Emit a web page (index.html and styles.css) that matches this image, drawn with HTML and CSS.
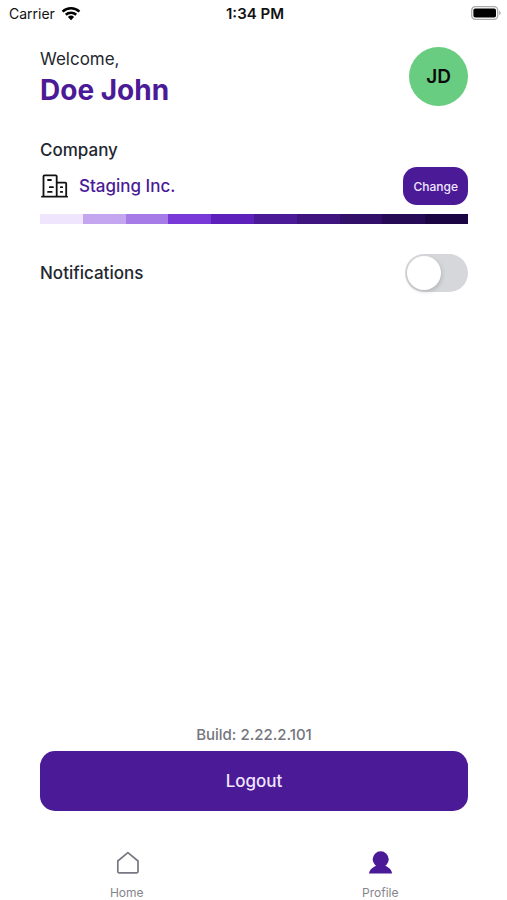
FILE: index.html
```html
<!DOCTYPE html>
<html lang="en">
<head>
  <meta charset="utf-8">
  <meta name="viewport" content="width=device-width, initial-scale=1">
  <title>Profile</title>
  <link rel="stylesheet" href="styles.css">
</head>
<body>
  <div class="status-bar">
    <div class="status-carrier">
      <span>Carrier</span>
      <svg class="wifi" viewBox="0 0 20 15" aria-hidden="true">
        <path d="M1.600 5.600a12.200 12.200 0 0 1 16.800 0M4.800 8.800a7.600 7.600 0 0 1 10.400 0" fill="none" stroke="#000" stroke-width="2.6"/>
        <path d="M6.900 10.900a4.500 4.500 0 0 1 6.200 0L10 14.200z" fill="#000"/>
      </svg>
    </div>
    <div class="status-time">1:34 PM</div>
    <div class="status-battery">
      <svg class="battery" viewBox="0 0 30 14" aria-hidden="true">
        <rect x=".7" y=".7" width="26" height="12.6" rx="3.6" fill="#fff" stroke="#aaa" stroke-width="1.3"/>
        <rect x="2.4" y="2.4" width="22.6" height="9.2" rx="1.8" fill="#000"/>
        <path d="M28.200 4.800c1.900.7 1.900 3.700 0 4.400z" fill="#aaa"/>
      </svg>
    </div>
  </div>

  <main class="screen">
    <header class="greeting">
      <div>
        <p class="label">Welcome,</p>
        <h1 class="name">Doe John</h1>
      </div>
      <div class="avatar">JD</div>
    </header>

    <section class="company">
      <h2 class="label">Company</h2>
      <div class="company-row">
        <svg class="building" viewBox="0 0 28 24" fill="none" stroke="#111" stroke-width="1.8" stroke-linecap="round" stroke-linejoin="round" aria-hidden="true">
          <path d="M2 22.700h25.100M3.500 22.700V2.300q0-1 1-1h11.200q1 0 1 1v20.400M16.700 8.600h8.500q1 0 1 1v13.100"/>
          <path d="M8 6h3M9.800 13.200h3.200M8 17.900h3.700M20.800 13.200h1.400M20.800 17.900h1.400"/>
        </svg>
        <span class="company-name">Staging Inc.</span>
        <button class="change" type="button">Change</button>
      </div>
      <div class="palette">
        <span class="shade shade-1"></span>
        <span class="shade shade-2"></span>
        <span class="shade shade-3"></span>
        <span class="shade shade-4"></span>
        <span class="shade shade-5"></span>
        <span class="shade shade-6"></span>
        <span class="shade shade-7"></span>
        <span class="shade shade-8"></span>
        <span class="shade shade-9"></span>
        <span class="shade shade-10"></span>
      </div>
    </section>

    <div class="setting">
      <label class="label" for="notifications">Notifications</label>
      <input class="switch" id="notifications" type="checkbox" role="switch">
    </div>

    <footer class="account">
      <p class="build">Build: 2.22.2.101</p>
      <button class="logout" type="button">Logout</button>
    </footer>
  </main>

  <nav class="tabs">
    <a class="tab" href="#home">
      <svg class="tab-icon" viewBox="0 0 24 24" fill="none" stroke="#777881" stroke-width="1.7" stroke-linejoin="round" aria-hidden="true">
        <path d="M12.900 1.600 23 10V20.600q0 1.200-1.200 1.200H4Q2.800 21.800 2.800 20.600V10z"/>
      </svg>
      <span>Home</span>
    </a>
    <a class="tab" href="#profile" aria-current="page">
      <svg class="tab-icon" viewBox="0 0 24 24" fill="#4b1a96" aria-hidden="true">
        <circle cx="12.700" cy="8.300" r="8"/>
        <path d="M1 22.400C1.500 18.500 5 16 9 14.500h7.400c4 1.500 7.200 4 7.600 7.900z"/>
      </svg>
      <span>Profile</span>
    </a>
  </nav>
</body>
</html>
```
FILE: styles.css
```css
* {
  box-sizing: border-box;
}

body {
  display: flex;
  flex-direction: column;
  min-height: 100vh;
  margin: 0;
  background: #fff;
  color: #23272f;
  font-family: Inter, "Liberation Sans", sans-serif;
}

h1,
h2,
p {
  margin: 0;
}

button {
  border: 0;
  background: #4b1a96;
  color: #f0e6ff;
  font-family: inherit;
  font-weight: 500;
  cursor: pointer;
}

.status-bar {
  display: grid;
  grid-template-columns: 1fr auto 1fr;
  align-items: center;
  height: 26px;
  padding: 0 6px 0 9px;
  color: #111;
  font-size: 14px;
}

.status-carrier {
  display: flex;
  align-items: center;
  gap: 6px;
}

.wifi {
  width: 20px;
  height: 15px;
}

.status-time {
  font-size: 15px;
  font-weight: 600;
}

.status-battery {
  display: flex;
  justify-content: flex-end;
}

.battery {
  width: 30px;
  height: 14px;
}

.screen {
  display: flex;
  flex: 1;
  flex-direction: column;
  padding: 21px 39px 0 40px;
}

.greeting {
  display: flex;
  align-items: flex-start;
  justify-content: space-between;
}

.label {
  font-size: 17px;
  font-weight: 500;
  line-height: 24px;
}

.greeting .label {
  font-weight: 400;
}

.name {
  color: #4b1a96;
  font-size: 28px;
  font-weight: 700;
  line-height: 38px;
}

.avatar {
  display: grid;
  place-items: center;
  width: 59px;
  height: 59px;
  border-radius: 50%;
  background: #68cd80;
  color: #0b0b0b;
  font-size: 19px;
  font-weight: 600;
}

.company {
  margin-top: 29px;
}

.company-row {
  display: flex;
  align-items: center;
  margin-top: 5px;
}

.building {
  width: 28px;
  height: 24px;
}

.company-name {
  flex: 1;
  margin-left: 11px;
  color: #4b1a96;
  font-size: 17px;
  font-weight: 500;
}

.change {
  height: 38px;
  padding: 0 10px;
  border-radius: 14px;
  font-size: 12px;
}

.palette {
  display: flex;
  height: 10px;
  margin-top: 9px;
}

.shade {
  flex: 1;
}

.shade-1 { background: #efe6fe; }
.shade-2 { background: #c4a5f0; }
.shade-3 { background: #a67be7; }
.shade-4 { background: #7939d9; }
.shade-5 { background: #5d20bb; }
.shade-6 { background: #4b1a96; }
.shade-7 { background: #3f147f; }
.shade-8 { background: #320f68; }
.shade-9 { background: #260a55; }
.shade-10 { background: #1b0543; }

.setting {
  display: flex;
  align-items: center;
  justify-content: space-between;
  margin-top: 30px;
}

.switch {
  width: 63px;
  height: 38px;
  margin: 0;
  padding: 2px;
  border-radius: 19px;
  background: #d5d7da;
  appearance: none;
  cursor: pointer;
}

.switch::before {
  display: block;
  width: 34px;
  height: 34px;
  border-radius: 50%;
  background: #fff;
  box-shadow: 1px 2px 4px rgb(0 0 0 / 15%);
  content: "";
}

.switch:checked {
  background: #4b1a96;
}

.switch:checked::before {
  margin-left: auto;
}

.account {
  margin-top: auto;
  padding-top: 24px;
}

.build {
  color: #74767d;
  font-size: 15px;
  font-weight: 500;
  line-height: 20px;
  text-align: center;
}

.logout {
  width: 100%;
  height: 60px;
  margin-top: 6px;
  border-radius: 15px;
  font-size: 17px;
}

.tabs {
  display: grid;
  grid-template-columns: 1fr 1fr;
  padding: 40px 0 0;
}

.tab {
  display: flex;
  flex-direction: column;
  align-items: center;
  gap: 11px;
  color: #85868c;
  font-size: 12px;
  line-height: 14px;
  text-decoration: none;
}

.tab-icon {
  width: 24px;
  height: 24px;
}
```
